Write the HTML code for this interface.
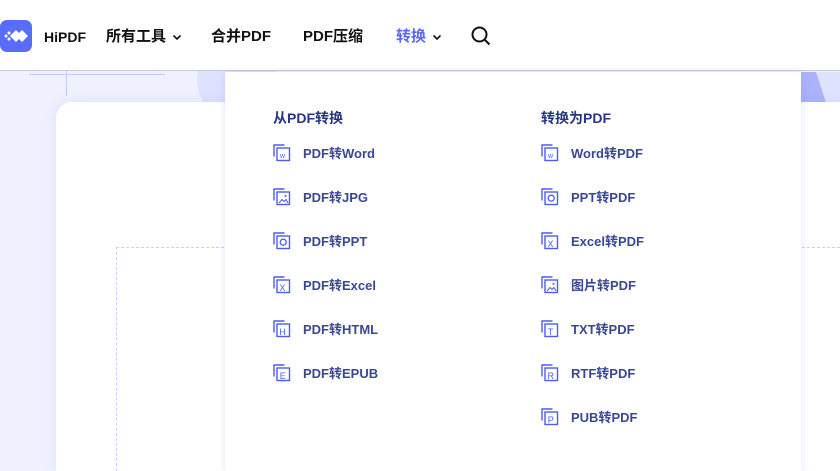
<!DOCTYPE html>
<html style="width:840px;height:471px;overflow:hidden"><head><meta charset="utf-8"><style>
*{margin:0;padding:0;box-sizing:border-box}
body{width:840px;height:471px;overflow:hidden;background:#eff1fe;font-family:"Liberation Sans","Noto Sans CJK SC",sans-serif;position:relative}
.hdr{position:absolute;left:0;top:0;width:840px;height:71px;background:#fff;border-bottom:1px solid #c9cbd6}
.logo{position:absolute;left:0;top:20px;width:32px;height:32px;border-radius:7px;background:#5a6cfb}
.nav{position:absolute;top:27px;font-size:15px;font-weight:bold;color:#111;line-height:20px}
.card{position:absolute;left:56px;top:102px;width:784px;height:369px;background:#fff;border-radius:16px 0 0 0;box-shadow:0 0 12px rgba(120,130,255,.15)}
.dash{position:absolute;left:116px;top:247px;width:724px;height:224px;border-top:1px dashed #c9cdfc;border-left:1px dashed #c9cdfc}
.panel{position:absolute;left:225px;top:72px;width:576px;height:399px;background:#fff;box-shadow:0 0 8px rgba(100,110,230,.18)}
.h{position:absolute;font-size:14px;font-weight:bold;color:#283680;line-height:20px}
.it{position:absolute;font-size:13px;color:#3a4893;line-height:18px;font-weight:bold}
.ic{position:absolute;width:18px;height:18px}
.chev{display:inline-block;vertical-align:middle;margin-left:6px}
</style></head><body>
<div style="position:absolute;left:197px;top:40px;width:80px;height:80px;border-radius:50%;background:#dde2ff"></div>
<div style="position:absolute;left:801px;top:72px;width:39px;height:31px;background:#dfe3ff"></div>
<div style="position:absolute;left:801px;top:72px;width:25px;height:31px;background:#aab3fb;clip-path:polygon(0 0,60% 0,100% 100%,0 100%)"></div>
<div style="position:absolute;left:29px;top:74px;width:136px;height:1px;background:#c3cbfb"></div>
<div style="position:absolute;left:66px;top:71px;width:1px;height:25px;background:#c3cbfb"></div>
<div class="card"></div>
<div class="dash"></div>
<div class="hdr">
<div class="logo"><svg width="32" height="32" viewBox="0 0 32 32"><path d="M16 10l6 6-6 6-6-6z M22 10l6 6-6 6-3-3 3-3-3-3z" fill="#fff"/><circle cx="9" cy="13" r="1.5" fill="#fff"/><circle cx="6" cy="16" r="1.5" fill="#fff"/><circle cx="9" cy="19" r="1.5" fill="#fff"/><circle cx="12" cy="16" r="1.5" fill="#fff"/></svg></div>
<div class="nav" style="left:44px;font-size:14px">HiPDF</div>
<div class="nav" style="left:106px">所有工具<svg class="chev" width="10" height="8" viewBox="0 0 10 8"><path d="M1.5 2.5l3.5 3.5 3.5-3.5" fill="none" stroke="#111" stroke-width="1.6"/></svg></div>
<div class="nav" style="left:211px">合并PDF</div>
<div class="nav" style="left:303px">PDF压缩</div>
<div class="nav" style="left:396px;color:#5967f7">转换<svg class="chev" width="10" height="8" viewBox="0 0 10 8"><path d="M1.5 2.5l3.5 3.5 3.5-3.5" fill="none" stroke="#111" stroke-width="1.6"/></svg></div>
<svg style="position:absolute;left:470px;top:25px" width="22" height="22" viewBox="0 0 22 22"><circle cx="9.5" cy="9.5" r="7" fill="none" stroke="#111" stroke-width="2"/><path d="M14.5 14.5l5 5" stroke="#111" stroke-width="2"/></svg>
</div>
<div class="panel"></div>
<div class="h" style="left:273px;top:108px">从PDF转换</div>
<div class="h" style="left:541px;top:108px">转换为PDF</div>
<svg width="0" height="0" style="position:absolute"><defs>
<g id="b"><path d="M1 12.5V1H11.5" fill="none" stroke="#4d5cf5" stroke-width="1.4"/><rect x="4" y="4" width="12.5" height="12.5" fill="#fff" stroke="#4d5cf5" stroke-width="1.4"/></g>
</defs></svg>
<svg class="ic" style="left:273px;top:144px"><use href="#b"/><text x="7" y="14" font-size="7" fill="#4d5cf5" font-family="Liberation Sans">w</text></svg>
<div class="it" style="left:303px;top:145px">PDF转Word</div>
<svg class="ic" style="left:273px;top:188px"><use href="#b"/><path d="M6 15l3-3.5 2 2 2-2 2 3.5" fill="none" stroke="#4d5cf5"/><circle cx="12.5" cy="8" r="1" fill="#4d5cf5"/></svg>
<div class="it" style="left:303px;top:189px">PDF转JPG</div>
<svg class="ic" style="left:273px;top:232px"><use href="#b"/><circle cx="10.2" cy="10.2" r="3" fill="none" stroke="#4d5cf5" stroke-width="1.3"/></svg>
<div class="it" style="left:303px;top:233px">PDF转PPT</div>
<svg class="ic" style="left:273px;top:276px"><use href="#b"/><text x="6.5" y="15" font-size="9" fill="#4d5cf5" font-family="Liberation Sans">X</text></svg>
<div class="it" style="left:303px;top:277px">PDF转Excel</div>
<svg class="ic" style="left:273px;top:320px"><use href="#b"/><text x="6.3" y="15" font-size="9" fill="#4d5cf5" font-family="Liberation Sans">H</text></svg>
<div class="it" style="left:303px;top:321px">PDF转HTML</div>
<svg class="ic" style="left:273px;top:364px"><use href="#b"/><text x="6.8" y="15" font-size="9" fill="#4d5cf5" font-family="Liberation Sans">E</text></svg>
<div class="it" style="left:303px;top:365px">PDF转EPUB</div>
<svg class="ic" style="left:541px;top:144px"><use href="#b"/><text x="7" y="14" font-size="7" fill="#4d5cf5" font-family="Liberation Sans">w</text></svg>
<div class="it" style="left:571px;top:145px">Word转PDF</div>
<svg class="ic" style="left:541px;top:188px"><use href="#b"/><circle cx="10.2" cy="10.2" r="3" fill="none" stroke="#4d5cf5" stroke-width="1.3"/></svg>
<div class="it" style="left:571px;top:189px">PPT转PDF</div>
<svg class="ic" style="left:541px;top:232px"><use href="#b"/><text x="6.5" y="15" font-size="9" fill="#4d5cf5" font-family="Liberation Sans">X</text></svg>
<div class="it" style="left:571px;top:233px">Excel转PDF</div>
<svg class="ic" style="left:541px;top:276px"><use href="#b"/><path d="M6 15l3-3.5 2 2 2-2 2 3.5" fill="none" stroke="#4d5cf5"/><circle cx="12.5" cy="8" r="1" fill="#4d5cf5"/></svg>
<div class="it" style="left:571px;top:277px">图片转PDF</div>
<svg class="ic" style="left:541px;top:320px"><use href="#b"/><text x="6.8" y="15" font-size="9" fill="#4d5cf5" font-family="Liberation Sans">T</text></svg>
<div class="it" style="left:571px;top:321px">TXT转PDF</div>
<svg class="ic" style="left:541px;top:364px"><use href="#b"/><text x="6.5" y="15" font-size="9" fill="#4d5cf5" font-family="Liberation Sans">R</text></svg>
<div class="it" style="left:571px;top:365px">RTF转PDF</div>
<svg class="ic" style="left:541px;top:408px"><use href="#b"/><text x="6.8" y="15" font-size="9" fill="#4d5cf5" font-family="Liberation Sans">P</text></svg>
<div class="it" style="left:571px;top:409px">PUB转PDF</div>
</body></html>
